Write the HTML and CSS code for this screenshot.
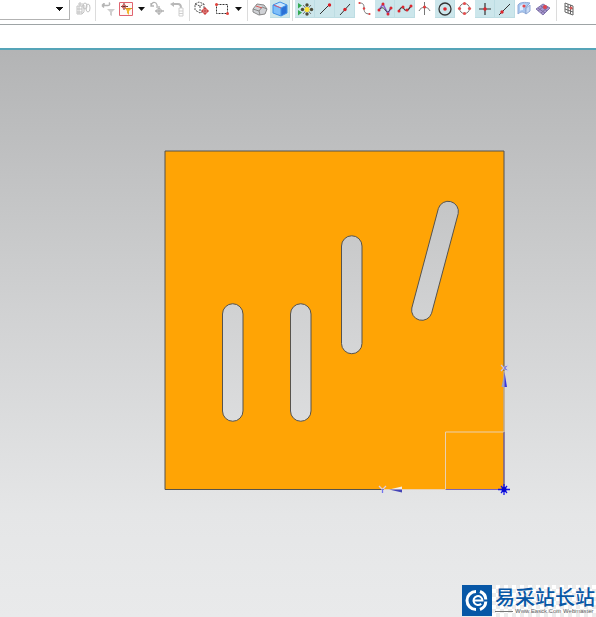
FILE: index.html
```html
<!DOCTYPE html>
<html lang="en">
<head>
<meta charset="utf-8">
<title>Part view</title>
<link rel="stylesheet" href="styles.css">
</head>
<body>
<header class="toolbar">
  <select class="scope" aria-label="Selection scope"><option></option></select>
  <button class="tool" aria-label="Interpart link"><svg viewBox="0 0 20 18"><g fill="none" stroke="#c2c2c2"><path d="M4 6h5v8H4zM4 9h5M4 12h5M6 6v8M7 2v4M5 4h5M9 6l2-1v7l-2 2"/><ellipse cx="12" cy="6" rx="2" ry="3"/><ellipse cx="15" cy="8" rx="2" ry="4"/></g></svg></button>
  <span class="sep"></span>
  <button class="tool slim" aria-label="Reset filter"><svg viewBox="0 0 18 18"><path d="M6 3v3M4 5.500h6c2 0 2-2 1-3M4 5.500l2-2M4 5.500l2 2" fill="none" stroke="#b5b5b5" stroke-width="1.500"/><path d="M9 9h8l-3 3v4l-2-1v-3z" fill="#cfcfcf"/></svg></button>
  <button class="tool" aria-label="Selection filter"><svg viewBox="0 0 20 18"><path d="M3.500 2.500h13v13h-13z" fill="#fff8f6" stroke="#e06470"/><path d="M8 3v7M5 6.500h7" stroke="#5b3a35"/><circle cx="8" cy="6.500" r="1.800" fill="none" stroke="#d55"/><path d="M9 8h7l-3 3v4l-2-2v-2z" fill="#f1b82e"/><path d="M9 8.500h7" stroke="#d69625"/></svg></button>
  <button class="more" aria-label="More filters"><svg viewBox="0 0 11 18"><path d="M2 7h7L5.500 11z" fill="#111"/></svg></button>
  <button class="tool" aria-label="Move point"><svg viewBox="0 0 20 18"><g fill="none" stroke="#b2b2b2"><path d="M4 6c1-6 7-4 6 2M4 3v3h3M12 6v9M8 11h9" stroke-width="1.300"/><circle cx="12" cy="11" r="2.500"/></g></svg></button>
  <button class="tool" aria-label="Selection tree"><svg viewBox="0 0 20 18"><path d="M3 4l4-2v5z" fill="#b8b8b8"/><path d="M6 4h5c2 0 3 1 3 4" fill="none" stroke="#b8b8b8" stroke-width="2"/><path d="M12 8h4v8h-4zM12 11h4M12 13.500h4" fill="none" stroke="#cfcfcf"/></svg></button>
  <span class="sep"></span>
  <button class="tool" aria-label="Select body"><svg viewBox="0 0 20 18"><path d="M3 4l4-2 5 2v7l-4 2-5-3zM3 4l5 2 4-2M8 6v7" fill="none" stroke="#555" stroke-dasharray="2 1"/><circle cx="13" cy="11" r="2.500" fill="#f8d4d2" stroke="#d83b38"/><path d="M13 7v8M9 11h8" stroke="#b33"/></svg></button>
  <button class="tool" aria-label="Rectangle selection"><svg viewBox="0 0 20 18"><path d="M4.500 4.500h11v9h-11z" fill="none" stroke="#333" stroke-dasharray="2 1"/><g fill="#e4423b"><circle cx="4.500" cy="4.500" r="1.500"/><circle cx="15.500" cy="13.500" r="1.500"/></g></svg></button>
  <button class="more wide" aria-label="More selection tools"><svg viewBox="0 0 11 18"><path d="M2 7h7L5.500 11z" fill="#111"/></svg></button>
  <span class="sep"></span>
  <button class="tool" aria-label="Face on body"><svg viewBox="0 0 20 18"><path d="M3 9l4-5 7 1 3 4-2 5-6 1-6-3z" fill="#d0d2d6" stroke="#888"/><path d="M3 9l6 2 1 4M9 11l3-4 5 2" fill="none" stroke="#888"/><path d="M6 6l6 2" stroke="#df5a58"/></svg></button>
  <button class="tool on" aria-label="Shaded body"><svg viewBox="0 0 20 18"><path d="M3 5l7-3 7 3-6 3z" fill="#c7e6ff"/><path d="M3 5l8 3v8l-8-3z" fill="#7dbefa"/><path d="M11 8l6-3v8l-6 3z" fill="#2b70d6"/><path d="M3 5l7-3 7 3v8l-6 3-8-3zM3 5l8 3 6-3M11 8v8" fill="none" stroke="#3f90e6"/><path d="M4 5l7 3" stroke="#d75976"/></svg></button>
  <span class="sep"></span>
  <button class="tool on" aria-label="Enable snap point"><svg viewBox="0 0 20 18"><path d="M3 3l4 2.500-4 3zM3 10l4 2.500-4 3z" fill="#36aa52"/><path d="M8 5l8 9M16 5l-8 9" stroke="#777"/><circle cx="12" cy="9.500" r="2.500" fill="#ffe336"/><g fill="#4d4b38"><circle cx="12" cy="5" r="1.700"/><circle cx="12" cy="14" r="1.700"/><circle cx="7.500" cy="9.500" r="1.700"/><circle cx="16.500" cy="9.500" r="1.700"/></g></svg></button>
  <button class="tool on" aria-label="End point"><svg viewBox="0 0 20 18"><path d="M5 14l9-9" stroke="#333"/><circle cx="14.500" cy="5" r="1.700" fill="#d91f26"/></svg></button>
  <button class="tool on" aria-label="Mid point"><svg viewBox="0 0 20 18"><path d="M5 15L15 4" stroke="#333"/><circle cx="10" cy="9.500" r="1.700" fill="#d91f26"/></svg></button>
  <button class="tool" aria-label="Control point"><svg viewBox="0 0 20 18"><path d="M4 3c4 0 5 1 5 5s1 6 6 6" fill="none" stroke="#777"/><g fill="#e04444"><circle cx="4.500" cy="3" r="1.100"/><circle cx="9" cy="8.500" r="1.200"/><circle cx="14.500" cy="14" r="1.100"/></g></svg></button>
  <button class="tool on" aria-label="Spline pole"><svg viewBox="0 0 20 18"><path d="M4 10L8 4l5 10 3-7" fill="none" stroke="#8d5ccc" stroke-width="1.500"/><path d="M4 10c3-4 5-2 7 1 2 2 4 0 5-4" fill="none" stroke="#444"/><g fill="#dc2730"><circle cx="4" cy="10" r="1.500"/><circle cx="8" cy="4" r="1.500"/><circle cx="13" cy="14" r="1.500"/><circle cx="16" cy="8" r="1.500"/></g></svg></button>
  <button class="tool on" aria-label="Spline defining point"><svg viewBox="0 0 20 18"><path d="M4 11c2-5 4-4 6-1 3 1 4-1 6-4" fill="none" stroke="#333" stroke-width="1.200"/><g fill="#dc2730"><circle cx="4" cy="11" r="1.500"/><circle cx="8" cy="7" r="1.500"/><circle cx="12" cy="10" r="1.500"/><circle cx="16" cy="6" r="1.500"/></g></svg></button>
  <button class="tool" aria-label="Intersection point"><svg viewBox="0 0 20 18"><path d="M4 11c2-5 9-5 11 0M9.500 2v13" fill="none" stroke="#777"/><circle cx="9.500" cy="7" r="1.500" fill="#e23b3b"/></svg></button>
  <button class="tool on" aria-label="Arc center"><svg viewBox="0 0 20 18"><circle cx="10" cy="9" r="6" fill="none" stroke="#333" stroke-width="1.300"/><circle cx="10" cy="9" r="1.800" fill="#dc252c"/></svg></button>
  <button class="tool" aria-label="Quadrant point"><svg viewBox="0 0 20 18"><circle cx="9.500" cy="8.500" r="5" fill="none" stroke="#777"/><g fill="#e25050"><circle cx="9.500" cy="3.500" r="1.600"/><circle cx="9.500" cy="13.500" r="1.600"/><circle cx="4.500" cy="8.500" r="1.600"/><circle cx="14.500" cy="8.500" r="1.600"/></g></svg></button>
  <button class="tool on" aria-label="Existing point"><svg viewBox="0 0 20 18"><path d="M10 3v12M4 9h12" stroke="#333" stroke-width="1.200"/><circle cx="10" cy="9" r="1.700" fill="#dc252c"/></svg></button>
  <button class="tool on" aria-label="Point on curve"><svg viewBox="0 0 20 18"><path d="M4 15L15 4" stroke="#333"/><circle cx="7" cy="12" r="1.700" fill="#dc252c"/></svg></button>
  <button class="tool slim" aria-label="Point on face"><svg viewBox="0 0 18 18"><path d="M3 5c2-3 7-3 12-2l-3 3c-2 2-2 5-1 8-3-3-6-2-8 0z" fill="#a9c8f0" stroke="#8fa9d6"/><path d="M5 6c2-2 4-2 6-2-3 2-3 4-3 6-1 0-3 0-3 1z" fill="#e0edff"/><path d="M11 14V8l4-3v6z" fill="#c9dbf5" stroke="#8fa9d6"/><circle cx="9" cy="6" r="1.600" fill="#e3484d"/></svg></button>
  <button class="tool" aria-label="Point on facet"><svg viewBox="0 0 20 18"><path d="M3 9l7-5 7 4-7 7z" fill="#a897d1" stroke="#8479ad"/><path d="M5 8l7 5M8 6l6 5M5 11l7-6M8 13l7-6" stroke="#7a6fa0"/><circle cx="12" cy="7" r="2" fill="#df4450"/></svg></button>
  <span class="sep far"></span>
  <button class="tool" aria-label="Grid point"><svg viewBox="0 0 20 18"><path d="M5 3l8 3v9l-8-3zM8 4v9M10.500 5v9M5 6l8 3M5 9l8 3" fill="none" stroke="#666"/><circle cx="11" cy="8" r="1.500" fill="#d65757"/></svg></button>
</header>
<div class="prompt"></div>
<main class="stage">
  <svg class="model" viewBox="0 0 596 567" role="img" aria-label="Orange plate with four slots">
    <path class="plate" fill-rule="evenodd" d="M165 101H504V439.500H165ZM222.500 264a10.250 10.250 0 0 1 20.500 0V361a10.250 10.250 0 0 1-20.500 0ZM290.500 264a10.250 10.250 0 0 1 20.500 0V361a10.250 10.250 0 0 1-20.500 0ZM341.500 196a10.250 10.250 0 0 1 20.500 0V293.500a10.250 10.250 0 0 1-20.500 0ZM438.400 158.400a10.250 10.250 0 0 1 19.800 5.200L431.600 263.200a10.250 10.250 0 0 1-19.800-5.200Z"/>
    <path class="datum" d="M504 321V382M504 382H445.500V439.500M445.500 439.500H384"/>
    <path class="axis" d="M504 382V439.500H446"/>
    <path d="M504.500 322L501.500 337h3z" fill="#a0a0bd"/><path d="M504.500 322v15h2.500z" fill="#3737e4"/>
    <path d="M389 439.500l13-3v3z" fill="#f5eee7"/><path d="M389 439.500h13v3z" fill="#4545b7"/>
    <path d="M501 315l3.500 3.500 3.500-3.500M501 321l3.500-3.500 3.500 3.500" fill="none" stroke="#c4c4f0" stroke-width="1.300"/><path d="M504.500 318l2-2M504.500 318l2 2" stroke="#4646dc"/>
    <path d="M379 436l3.500 3.500 3.500-3.500" fill="none" stroke="#dfcee0" stroke-width="1.300"/><path d="M382.500 439v4" stroke="#7474ee" stroke-width="1.300"/>
    <path d="M498 439.500h12M504 434v11M501 436l6 7M507 436l-6 7" stroke="#1111e8" stroke-width="1.300"/><circle cx="504" cy="439.500" r="2.500" fill="#0808d0"/>
  </svg>
  <aside class="brand">
    <svg class="logo" viewBox="0 0 30 31" role="img" aria-label="Logo"><path d="M0 0h30v31H0z" fill="#0757a6"/><g fill="none" stroke="#fff"><path d="M14 6.500a9 9 0 0 0 0 18M18 6.500a9 9 0 0 1 5.800 8M18 24.500a9 9 0 0 0 5.800-8" stroke-width="3"/><path d="M12 15.500h8.500a4.500 4.500 0 1 0-1.300 3.200" stroke-width="2"/></g></svg>
    <div class="words"><div class="name" lang="zh-CN">易采站长站</div><div class="site">Www.Easck.Com Webmaster</div></div>
  </aside>
</main>
</body>
</html>
```

FILE: styles.css
```css
* { box-sizing: border-box; }
body {
  margin: 0;
  min-height: 100vh;
  display: flex;
  flex-direction: column;
  background: #fff;
  font-family: "Liberation Sans", sans-serif;
}
.toolbar {
  display: flex;
  align-items: flex-start;
  height: 25px;
  border-bottom: 1px solid #9ea4a6;
  overflow: hidden;
}
.scope {
  appearance: none;
  flex: none;
  width: 70px;
  height: 20px;
  margin-right: 3px;
  border: solid #b3b3b3;
  border-width: 0 1px 1px 0;
  border-radius: 0;
  background: conic-gradient(from 315deg at 50% 100%, #111 90deg, transparent 0) 55px 7px / 8px 4px no-repeat, #fff;
}
.tool, .more {
  flex: none;
  width: 20px;
  height: 18px;
  padding: 0;
  border: 0;
  background: transparent;
}
.tool svg, .more svg { display: block; width: 100%; height: 18px; }
.slim { width: 18px; }
.more { width: 11px; }
.more.wide { width: 13px; }
.on { background: #cce6eb; box-shadow: inset 0 -1px #bddde3, inset -1px 0 #bddde3; }
.sep {
  flex: none;
  width: 1px;
  height: 21px;
  margin: 0 2px;
  background: #dcdcdc;
}
.sep.far { margin: 0 3px; }
.prompt { height: 25px; border-bottom: 2px solid #55a4b8; }
.stage {
  position: relative;
  flex: 1;
  background: linear-gradient(#b3b4b5, #d0d1d2 45%, #e5e6e7 82%, #e9eaeb);
}
.model { display: block; width: 100%; height: auto; }
.plate { fill: #ffa405; stroke: #57534c; stroke-width: 1; }
.datum { fill: none; stroke: #ead0b0; stroke-width: 1; }
.axis { fill: none; stroke: #7965b5; stroke-width: 1; }
.brand {
  position: absolute;
  right: 0;
  bottom: 0;
  display: flex;
  height: 32px;
}
.logo { width: 30px; height: 31px; }
.words {
  padding: 0 1px 0 3px;
  white-space: nowrap;
  background: repeating-conic-gradient(#fff 0 25%, #ececec 0 50%) 0 0 / 8px 8px;
}
.name {
  font: 500 20px/23px "Noto Sans CJK SC", sans-serif;
  color: #0757a6;
}
.site {
  display: flex;
  align-items: center;
  gap: 2px;
  font-size: 6px;
  line-height: 6px;
  color: #666;
}
.site::before { content: ""; width: 18px; height: 1px; background: #777; }
```
